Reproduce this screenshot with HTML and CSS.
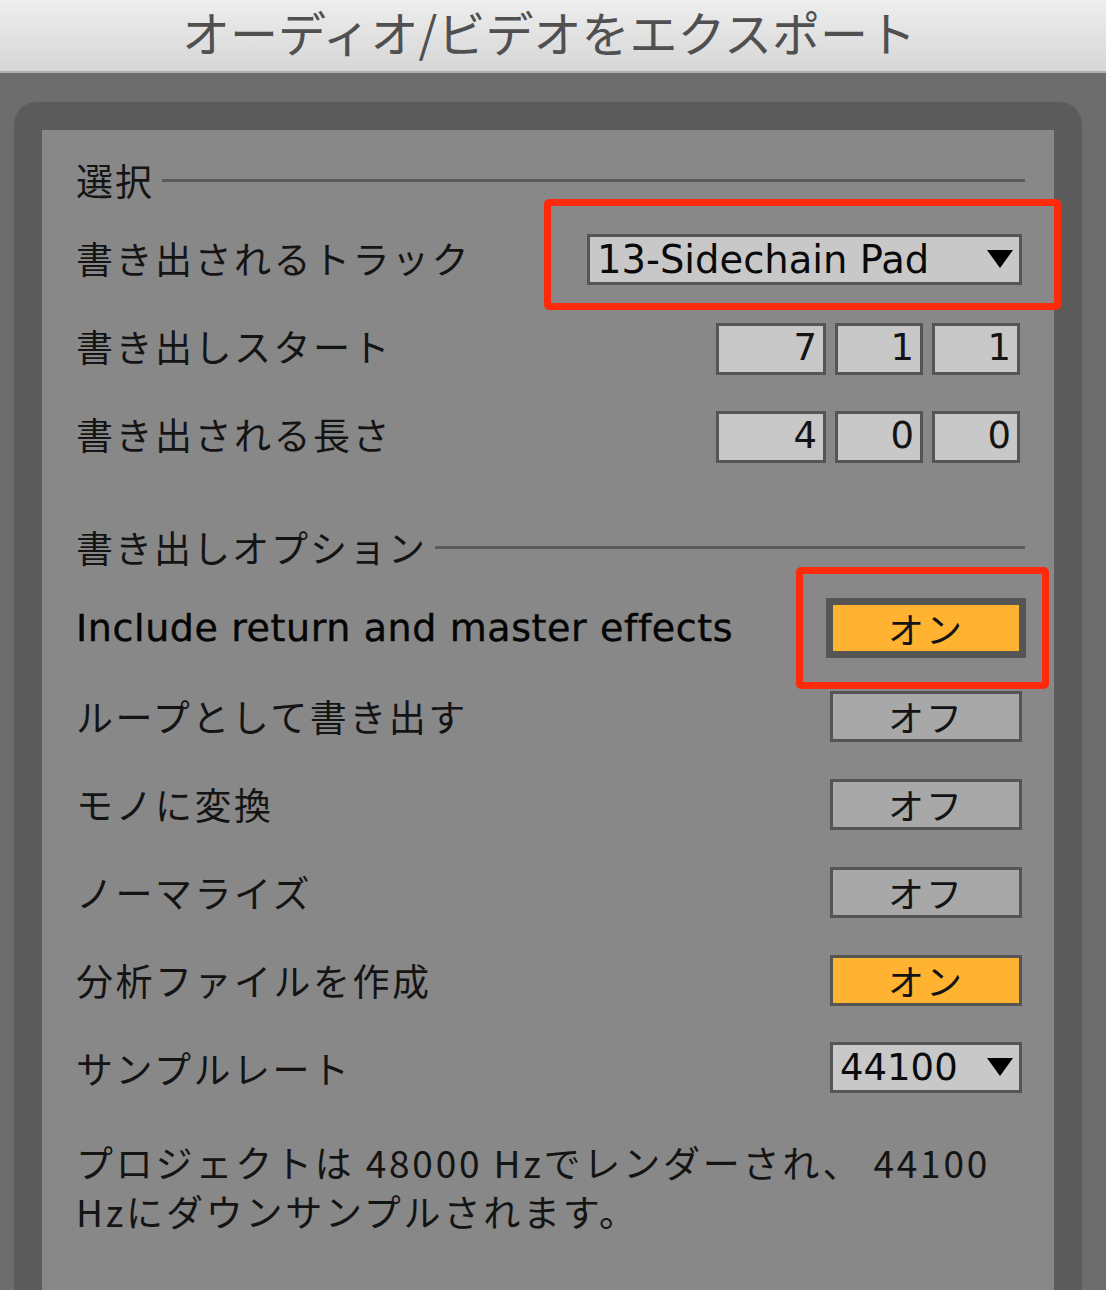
FILE: index.html
```html
<!DOCTYPE html>
<html lang="ja">
<head>
    <meta charset="UTF-8">
    <meta name="viewport" content="width=device-width, initial-scale=1.0">
    <title>オーディオ/ビデオをエクスポート</title>
    <link rel="stylesheet" href="styles.css">
</head>
<body>
    <header class="titlebar">
        <h1>オーディオ/ビデオをエクスポート</h1>
    </header>

    <main class="frame">
        <section class="panel">

            <div class="section-head first">
                <span>選択</span>
                <hr>
            </div>

            <div class="row">
                <span class="label">書き出されるトラック</span>
                <div class="mark-wrap">
                    <div class="select track-select">
                        <span>13-Sidechain Pad</span>
                        <svg class="arrow" viewBox="0 0 26 18"><polygon points="0,0 26,0 13,18"/></svg>
                    </div>
                    <div class="red-mark track-mark"></div>
                </div>
            </div>

            <div class="row">
                <span class="label">書き出しスタート</span>
                <div class="fields">
                    <div class="field wide">7</div>
                    <div class="field">1</div>
                    <div class="field">1</div>
                </div>
            </div>

            <div class="row">
                <span class="label">書き出される長さ</span>
                <div class="fields">
                    <div class="field wide">4</div>
                    <div class="field">0</div>
                    <div class="field">0</div>
                </div>
            </div>

            <div class="section-head second">
                <span>書き出しオプション</span>
                <hr>
            </div>

            <div class="row">
                <span class="label latin">Include return and master effects</span>
                <div class="mark-wrap">
                    <div class="toggle on focused">オン</div>
                    <div class="red-mark toggle-mark"></div>
                </div>
            </div>

            <div class="row">
                <span class="label">ループとして書き出す</span>
                <div class="toggle">オフ</div>
            </div>

            <div class="row">
                <span class="label">モノに変換</span>
                <div class="toggle">オフ</div>
            </div>

            <div class="row">
                <span class="label">ノーマライズ</span>
                <div class="toggle">オフ</div>
            </div>

            <div class="row">
                <span class="label">分析ファイルを作成</span>
                <div class="toggle on">オン</div>
            </div>

            <div class="row">
                <span class="label">サンプルレート</span>
                <div class="select rate-select">
                    <span>44100</span>
                    <svg class="arrow" viewBox="0 0 26 18"><polygon points="0,0 26,0 13,18"/></svg>
                </div>
            </div>

            <p class="note">プロジェクトは 48000 Hzでレンダーされ、 44100 Hzにダウンサンプルされます。</p>

        </section>
    </main>
</body>
</html>
```

FILE: styles.css
```css
body{
    margin: 0;
    background-color: rgb(109, 109, 109);
    font-family: "Noto Sans CJK JP", "Noto Sans", sans-serif;
    color: rgb(20, 20, 20);
    height: 1290px;
    overflow: hidden;
}

.titlebar{
    height: 71px;
    background: linear-gradient(rgb(238, 238, 238), rgb(214, 214, 214));
    border-bottom: 2px solid rgb(175, 175, 175);
    display: flex;
    justify-content: center;
    align-items: flex-start;
}

.titlebar h1{
    margin: 2px 0 0 -8px;
    font-size: 48px;
    line-height: 58px;
    font-weight: 400;
    color: rgb(80, 80, 80);
}

.frame{
    margin: 29px 24px 0 14px;
    padding: 28px 28px 0 28px;
    background-color: rgb(91, 91, 91);
    border-radius: 22px 22px 0 0;
    height: 1200px;
}

.panel{
    background-color: rgb(136, 136, 136);
    padding: 16px 29px 0 34px;
    height: 1200px;
    display: flex;
    flex-direction: column;
}

.section-head{
    display: flex;
    align-items: center;
    height: 68px;
    font-size: 37px;
    letter-spacing: 2px;
}

.section-head.second{
    height: 74px;
    margin-top: 32px;
}

.section-head hr{
    flex: 1;
    margin: 0 0 0 8px;
    border: none;
    border-top: 3px solid rgb(90, 90, 90);
}

.row{
    height: 88px;
    display: flex;
    justify-content: space-between;
    align-items: center;
    padding-right: 3px;
}

.label{
    font-size: 37px;
    letter-spacing: 2.5px;
}

.label.latin{
    font-family: "DejaVu Sans", "Noto Sans", sans-serif;
    letter-spacing: 0.6px;
    font-size: 38px;
    color: rgb(5, 5, 5);
    -webkit-text-stroke: 0.4px rgb(5, 5, 5);
}

.mark-wrap{
    position: relative;
}

.red-mark{
    position: absolute;
    border: 7px solid rgb(255, 42, 12);
    border-radius: 5px;
    pointer-events: none;
}

.track-mark{
    left: -43px;
    top: -33px;
    right: -39px;
    bottom: -25px;
}

.toggle-mark{
    left: -30px;
    top: -31px;
    right: -27px;
    bottom: -31px;
}

.select{
    box-sizing: border-box;
    display: flex;
    justify-content: space-between;
    align-items: center;
    background-color: rgb(200, 200, 200);
    border: 3px solid rgb(85, 85, 85);
    font-family: "DejaVu Sans", "Noto Sans", sans-serif;
    font-size: 37px;
    color: rgb(10, 10, 10);
}

.track-select{
    width: 435px;
    height: 51px;
    padding: 0 6px 0 7px;
    margin-top: 2px;
    font-size: 38.5px;
}

.rate-select{
    width: 192px;
    height: 51px;
    padding: 0 6px 0 7px;
    margin-top: -2px;
}

.arrow{
    width: 26px;
    height: 18px;
    fill: rgb(0, 0, 0);
}

.fields{
    display: flex;
    gap: 9px;
    margin-right: 2px;
    margin-top: 6px;
}

.field{
    box-sizing: border-box;
    width: 88px;
    height: 52px;
    background-color: rgb(200, 200, 200);
    border: 3px solid rgb(85, 85, 85);
    text-align: right;
    padding-right: 6px;
    font-family: "DejaVu Sans", "Noto Sans", sans-serif;
    font-size: 37px;
    line-height: 44px;
}

.field.wide{
    width: 110px;
}

.toggle{
    box-sizing: border-box;
    width: 192px;
    height: 51px;
    background-color: rgb(168, 168, 168);
    border: 3px solid rgb(85, 85, 85);
    display: flex;
    justify-content: center;
    align-items: center;
    font-size: 36px;
    letter-spacing: 2px;
}

.toggle.on{
    background-color: rgb(255, 179, 48);
}

.toggle.focused{
    width: 200px;
    height: 60px;
    border-width: 7px;
    margin-right: -4px;
}

.note{
    margin: 26px 0 0 0;
    font-size: 37px;
    line-height: 49px;
    letter-spacing: 2.8px;
    width: 940px;
}
```
